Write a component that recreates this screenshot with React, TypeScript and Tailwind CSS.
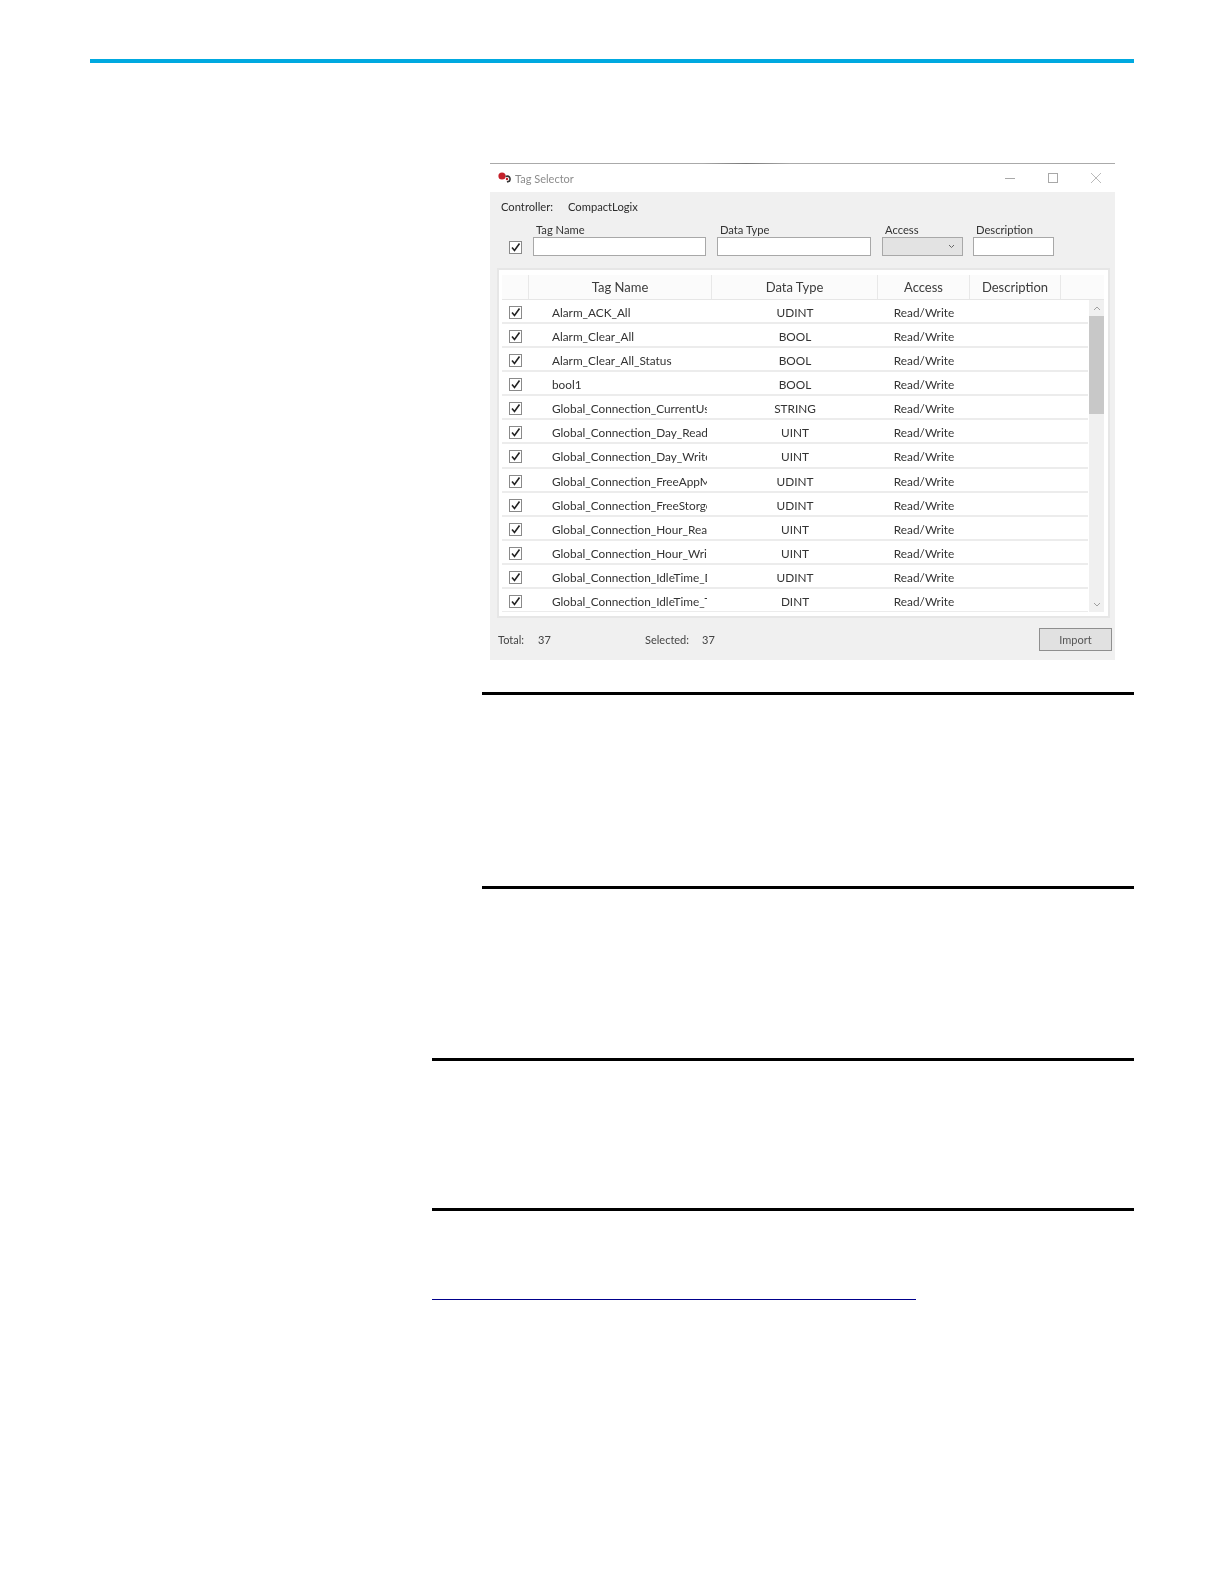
const rows: [string, string][] = [
  ["Alarm_ACK_All", "UDINT"],
  ["Alarm_Clear_All", "BOOL"],
  ["Alarm_Clear_All_Status", "BOOL"],
  ["bool1", "BOOL"],
  ["Global_Connection_CurrentUser", "STRING"],
  ["Global_Connection_Day_Read", "UINT"],
  ["Global_Connection_Day_Write", "UINT"],
  ["Global_Connection_FreeAppMem", "UDINT"],
  ["Global_Connection_FreeStorge", "UDINT"],
  ["Global_Connection_Hour_Read", "UINT"],
  ["Global_Connection_Hour_Write", "UINT"],
  ["Global_Connection_IdleTime_Day", "UDINT"],
  ["Global_Connection_IdleTime_Total", "DINT"],
];

function Check() {
  return (
    <span className="flex h-[13px] w-[13px] shrink-0 items-center justify-center border border-[#8a8a8a] bg-white">
      <svg width="11" height="11" viewBox="0 0 11 11" fill="none">
        <path d="M2 5.5 L4.5 8.5 L9.5 1.5" stroke="#222" strokeWidth="1.6" />
      </svg>
    </span>
  );
}

function Filter({ label, width, children }: { label: string; width: string; children?: React.ReactNode }) {
  return (
    <div className={`flex flex-col ${width}`}>
      <span className="h-[14px] pl-[3px] text-[11.2px] leading-[14px] text-[#333]">{label}</span>
      {children ?? <div className="h-[19px] border border-[#a8a8a8] bg-white" />}
    </div>
  );
}

export default function App() {
  return (
    <div className="flex h-[1584px] w-[1224px] flex-col bg-white pt-[59px] font-['Lato',sans-serif]">
      <div className="ml-[90px] h-1 w-[1044px] bg-[#00a9e0]" />

      <div className="ml-[490px] mt-[100px] flex h-[497px] w-[625px] flex-col blur-[0.35px]">
        <div className="h-px shrink-0 bg-[linear-gradient(90deg,#aaa_0%,#aaa_34%,#777_41%,#aaa_48%,#aaa_100%)]" />
        <div className="flex h-[28px] shrink-0 items-center bg-white pl-[7px] pr-[15px]">
          <svg width="16" height="14" viewBox="0 0 16 14" className="mr-[2px]">
            <circle cx="5" cy="5" r="3.6" fill="#c4202a" />
            <path d="M8.5 5.5 C12 4 14 7 12.5 10 L10 11" fill="none" stroke="#333" strokeWidth="1.6" />
            <circle cx="10" cy="8" r="1.2" fill="#c4202a" />
          </svg>
          <span className="pt-[2px] text-[11px] text-[#8c8c8c]">Tag Selector</span>
          <div className="ml-auto flex items-center gap-[33px]">
            <span className="h-px w-[10px] bg-[#a8a8a8]" />
            <span className="h-[10px] w-[10px] border border-[#a8a8a8]" />
            <svg width="10" height="10" viewBox="0 0 10 10" className="mr-[-1px]">
              <path d="M0 0 L10 10 M10 0 L0 10" stroke="#a8a8a8" strokeWidth="0.8" />
            </svg>
          </div>
        </div>

        <div className="flex min-h-0 flex-1 flex-col bg-[#f0f0f0]">
          <div className="flex h-[28px] shrink-0 items-center pl-[11px] pt-[3px] text-[11.2px] text-[#2c2c2c]">
            <span className="w-[67px]">Controller:</span>
            <span>CompactLogix</span>
          </div>

          <div className="mt-[3px] flex shrink-0 items-end pl-[19px]">
            <div className="mb-[2px] mr-[11px]">
              <Check />
            </div>
            <div className="flex gap-[11px]">
              <Filter label="Tag Name" width="w-[173px]" />
              <Filter label="Data Type" width="w-[154px]" />
              <Filter label="Access" width="w-[81px]">
                <div className="flex h-[19px] items-center justify-end border border-[#a8a8a8] bg-[#e3e3e3] pr-[7px]">
                  <svg width="7" height="5" viewBox="0 0 7 5" fill="none">
                    <path d="M1 1 L3.5 3.5 L6 1" stroke="#666" strokeWidth="1" />
                  </svg>
                </div>
              </Filter>
              <div className="-ml-px">
                <Filter label="Description" width="w-[81px]" />
              </div>
            </div>
          </div>

          <div className="ml-[7px] mr-[5px] mt-[12px] flex h-[350px] shrink-0 flex-col border-2 border-[#e6e6e6] bg-white pb-[4px] pl-[3px] pr-[4px] pt-[5px]">
            <div className="grid h-[25px] shrink-0 grid-cols-[27px_183px_166px_92px_91px_1fr] border-b-2 border-[#e6e6e6] text-center text-[13px] leading-[24px] text-[#3c3c3c]">
              <div className="border-r border-[#e8e8e8] bg-[#fbfbfb]" />
              <div className="border-r border-[#e8e8e8] bg-[#fbfbfb]">Tag Name</div>
              <div className="border-r border-[#e8e8e8] bg-[#fbfbfb]">Data Type</div>
              <div className="border-r border-[#e8e8e8] bg-[#fbfbfb]">Access</div>
              <div className="border-r border-[#e8e8e8] bg-[#fbfbfb]">Description</div>
              <div className="bg-[#fbfbfb]" />
            </div>
            <div className="flex min-h-0 flex-1">
              <div className="min-w-0 flex-1 overflow-hidden">
                {rows.map(([name, type]) => (
                  <div
                    key={name}
                    className="grid h-[24.08px] grid-cols-[27px_183px_166px_92px_91px_1fr] items-center border-b-2 border-[#ececec] text-[11.8px] leading-[24px] text-[#333]"
                  >
                    <div className="pl-[7px]">
                      <Check />
                    </div>
                    <div className="w-[178px] overflow-hidden whitespace-nowrap pl-[23px] pt-[1px]">{name}</div>
                    <div className="pt-[1px] text-center">{type}</div>
                    <div className="pt-[1px] text-center">Read/Write</div>
                    <div />
                    <div />
                  </div>
                ))}
              </div>
              <div className="ml-[1px] flex w-[15px] shrink-0 flex-col bg-[#f0f0f0]">
                <div className="flex h-[16px] shrink-0 items-center justify-center">
                  <svg width="8" height="5" viewBox="0 0 8 5" fill="none">
                    <path d="M1 4 L4 1 L7 4" stroke="#a0a0a0" strokeWidth="1" />
                  </svg>
                </div>
                <div className="h-[98px] shrink-0 bg-[#c8c8c8]" />
                <div className="mt-auto flex h-[16px] shrink-0 items-center justify-center">
                  <svg width="8" height="5" viewBox="0 0 8 5" fill="none">
                    <path d="M1 1 L4 4 L7 1" stroke="#a0a0a0" strokeWidth="1" />
                  </svg>
                </div>
              </div>
            </div>
          </div>

          <div className="flex min-h-0 flex-1 items-center pl-[8px] pr-[3px] text-[11px] text-[#444]">
            <span className="w-[40px] pt-[3px]">Total:</span>
            <span className="w-[107px] pt-[3px]">37</span>
            <span className="w-[57px] pt-[3px]">Selected:</span>
            <span className="pt-[3px]">37</span>
            <div className="ml-auto flex h-[23px] w-[73px] items-center justify-center border border-[#8f8f8f] bg-[#e1e1e1] pt-[3px] text-[#555]">
              Import
            </div>
          </div>
        </div>
      </div>

      <div className="ml-[482px] mt-[32px] h-[3px] w-[652px] bg-black" />
      <div className="ml-[482px] mt-[191px] h-[3px] w-[652px] bg-black" />
      <div className="ml-[432px] mt-[169px] h-[3px] w-[702px] bg-black" />
      <div className="ml-[432px] mt-[147px] h-[3px] w-[702px] bg-black" />
      <div className="ml-[432px] mt-[88px] h-px w-[484px] bg-[#00008b]" />
    </div>
  );
}
